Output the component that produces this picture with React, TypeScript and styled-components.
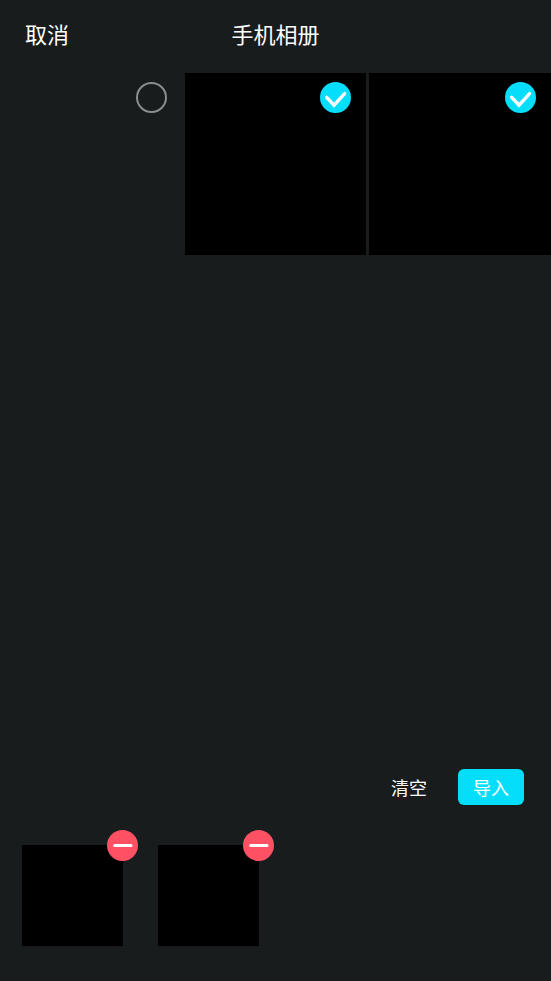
import React, { useState } from "react";
import styled, { createGlobalStyle } from "styled-components";

const GlobalStyle = createGlobalStyle`
  *, *::before, *::after { box-sizing: border-box; }
  body {
    margin: 0;
    background: #181c1d;
    color: #fff;
    font-family: "Noto Sans CJK SC", sans-serif;
  }
  button { font-family: inherit; color: inherit; border: 0; padding: 0; background: none; cursor: pointer; }
`;

const Page = styled.div`
  display: flex;
  flex-direction: column;
  min-height: 100vh;
`;

const Header = styled.header`
  display: grid;
  grid-template-columns: 1fr auto 1fr;
  align-items: center;
  height: 73px;
  padding: 0 25px 8px;
`;

const CancelButton = styled.button`
  justify-self: start;
  font-size: 22px;
  line-height: 32px;
`;

const Title = styled.h1`
  margin: 0;
  font-size: 22px;
  font-weight: 400;
  line-height: 32px;
`;

const PhotoGrid = styled.main`
  flex: 1;
  display: grid;
  grid-template-columns: repeat(3, 1fr);
  align-content: start;
  gap: 3px;
`;

const PhotoTile = styled.label<{ $empty: boolean }>`
  position: relative;
  aspect-ratio: 1;
  background: ${(p) => (p.$empty ? "transparent" : "#000")};
  cursor: pointer;
`;

const PhotoCheckbox = styled.input`
  position: absolute;
  top: 9px;
  right: 15px;
  width: 31px;
  height: 31px;
  margin: 0;
  appearance: none;
  border: 2px solid #8b8d8e;
  border-radius: 50%;

  &:checked {
    border: 0;
    background: #05defa;
  }
`;

const TickIcon = styled.svg`
  position: absolute;
  top: 9px;
  right: 15px;
  width: 31px;
  height: 31px;
  pointer-events: none;
`;

const Footer = styled.footer`
  display: flex;
  flex-direction: column;
  gap: 40px;
  padding: 0 27px 35px 22px;
`;

const Actions = styled.div`
  display: flex;
  justify-content: flex-end;
  align-items: center;
  gap: 31px;
`;

const ActionButton = styled.button<{ $primary?: boolean }>`
  height: 36px;
  font-size: 18px;
  line-height: 36px;
  ${(p) => p.$primary && "padding: 0 15px; border-radius: 6px; background: #05defa;"}
`;

const SelectedList = styled.ul`
  display: flex;
  gap: 35px;
  min-height: 101px;
  margin: 0;
  padding: 0;
  list-style: none;
`;

const SelectedPhoto = styled.li`
  position: relative;
  width: 101px;
  height: 101px;
  background: #000;
`;

const RemoveButton = styled.button`
  position: absolute;
  top: -15px;
  right: -15px;
  width: 31px;
  height: 31px;
  border-radius: 50%;
  background: #ff5064;

  svg { display: block; }
`;

const photos = [
  { id: 1, empty: true },
  { id: 2, empty: false },
  { id: 3, empty: false },
];

export default function App() {
  const [selected, setSelected] = useState<number[]>([2, 3]);

  const toggle = (id: number) =>
    setSelected((ids) => (ids.includes(id) ? ids.filter((i) => i !== id) : [...ids, id]));

  return (
    <Page>
      <GlobalStyle />
      <Header>
        <CancelButton type="button">取消</CancelButton>
        <Title>手机相册</Title>
      </Header>
      <PhotoGrid>
        {photos.map(({ id, empty }) => (
          <PhotoTile key={id} $empty={empty}>
            <PhotoCheckbox
              type="checkbox"
              aria-label={`照片 ${id}`}
              checked={selected.includes(id)}
              onChange={() => toggle(id)}
            />
            {selected.includes(id) && (
              <TickIcon viewBox="0 0 31 31" aria-hidden="true">
                <path
                  d="M6.7 15.3 14 23.2 24.6 11.6"
                  fill="none"
                  stroke="#fff"
                  strokeWidth="3.4"
                  strokeLinecap="round"
                />
              </TickIcon>
            )}
          </PhotoTile>
        ))}
      </PhotoGrid>
      <Footer>
        <Actions>
          <ActionButton type="button" onClick={() => setSelected([])}>清空</ActionButton>
          <ActionButton type="button" $primary>导入</ActionButton>
        </Actions>
        <SelectedList>
          {selected.map((id) => (
            <SelectedPhoto key={id}>
              <RemoveButton type="button" aria-label={`移除照片 ${id}`} onClick={() => toggle(id)}>
                <svg width="31" height="31" viewBox="0 0 31 31" aria-hidden="true">
                  <path d="M7.7 15.5H24" stroke="#fff" strokeWidth="3" strokeLinecap="round" />
                </svg>
              </RemoveButton>
            </SelectedPhoto>
          ))}
        </SelectedList>
      </Footer>
    </Page>
  );
}
